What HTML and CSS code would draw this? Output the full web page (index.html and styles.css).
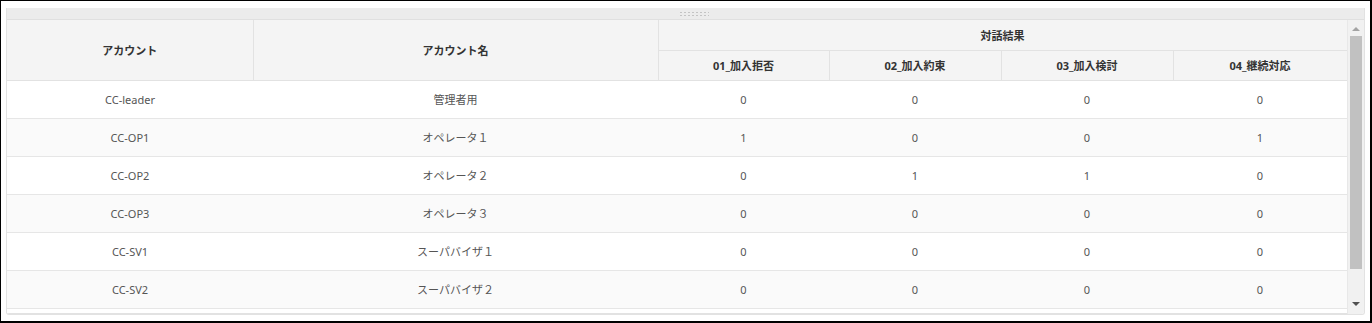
FILE: index.html
```html
<!DOCTYPE html>
<html lang="ja">
<head>
<meta charset="utf-8">
<link rel="stylesheet" href="styles.css">
</head>
<body>
<div class="frame">
  <div class="panel">
    <div class="grip-bar"><span class="grip"></span></div>
    <div class="body">
      <div class="viewport">
        <table class="grid">
          <colgroup>
            <col class="c1"><col class="c2"><col class="c3"><col class="c4"><col class="c5"><col class="c6">
          </colgroup>
          <thead>
            <tr class="h1">
              <th rowspan="2">アカウント</th>
              <th rowspan="2">アカウント名</th>
              <th colspan="4">対話結果</th>
            </tr>
            <tr class="h2">
              <th>01_加入拒否</th>
              <th>02_加入約束</th>
              <th>03_加入検討</th>
              <th>04_継続対応</th>
            </tr>
          </thead>
          <tbody>
            <tr><td>CC-leader</td><td>管理者用</td><td>0</td><td>0</td><td>0</td><td>0</td></tr>
            <tr class="alt"><td>CC-OP1</td><td>オペレータ１</td><td>1</td><td>0</td><td>0</td><td>1</td></tr>
            <tr><td>CC-OP2</td><td>オペレータ２</td><td>0</td><td>1</td><td>1</td><td>0</td></tr>
            <tr class="alt"><td>CC-OP3</td><td>オペレータ３</td><td>0</td><td>0</td><td>0</td><td>0</td></tr>
            <tr><td>CC-SV1</td><td>スーパバイザ１</td><td>0</td><td>0</td><td>0</td><td>0</td></tr>
            <tr class="alt"><td>CC-SV2</td><td>スーパバイザ２</td><td>0</td><td>0</td><td>0</td><td>0</td></tr>
            <tr><td></td><td></td><td></td><td></td><td></td><td></td></tr>
          </tbody>
        </table>
      </div>
      <div class="scrollbar">
        <span class="arrow up"></span>
        <div class="track"><div class="thumb"></div></div>
        <span class="arrow down"></span>
      </div>
    </div>
  </div>
</div>
</body>
</html>
```

FILE: styles.css
```css
* { box-sizing: border-box; }
html, body { margin: 0; padding: 0; background: #fff; }
body {
  font-family: "Noto Sans", "Noto Sans CJK JP", sans-serif;
  font-size: 11px;
  color: #555;
}
.frame {
  width: 1372px;
  height: 323px;
  border: 1px solid #000;
  border-bottom-width: 2px;
  border-right-width: 2px;
  padding: 7px 6px 0 5px;
}
.panel {
  width: 1359px;
  height: 307px;
  border: 1px solid #e2e2e2;
  border-top: none;
  border-radius: 0 0 3px 3px;
  display: flex;
  flex-direction: column;
  overflow: hidden;
}
.grip-bar {
  height: 12px;
  background: #ececec;
  border-bottom: 1px solid #e0e0e0;
  display: flex;
  justify-content: center;
  align-items: center;
  padding-left: 16px;
}
.grip {
  width: 30px;
  height: 5px;
  background-image: radial-gradient(circle, #c4c4c4 0.9px, transparent 1.1px);
  background-size: 4px 3px;
  background-position: 0 0;
}
.body {
  flex: 1;
  display: flex;
  min-height: 0;
}
.viewport {
  width: 1341px;
  overflow: hidden;
  border-bottom: 1px solid #e2e2e2;
}
.grid {
  width: 1340px;
  table-layout: fixed;
  border-collapse: collapse;
}
.c1 { width: 246px; }
.c2 { width: 405px; }
.c3 { width: 171px; }
.c4 { width: 172px; }
.c5 { width: 172px; }
.c6 { width: 174px; }
th {
  background: #f4f4f4;
  color: #333;
  font-weight: bold;
  font-size: 11px;
  border: 1px solid #e2e2e2;
  border-top: none;
  height: 30px;
  padding: 0;
  text-align: center;
}
.h1 th:first-child { border-left: none; }
.h2 th { height: 30px; }
td {
  height: 38px;
  text-align: center;
  padding: 0;
  border-bottom: 1px solid #e6e6e6;
  background: #fff;
  color: #555;
}
tr.alt td { background: #fafafa; }
.scrollbar {
  width: 17px;
  background: #f1f1f1;
  display: flex;
  flex-direction: column;
  align-items: center;
  border-left: 1px solid #e8e8e8;
}
.arrow {
  width: 0;
  height: 0;
  border-left: 4px solid transparent;
  border-right: 4px solid transparent;
}
.arrow.up {
  border-bottom: 4px solid #a3a3a3;
  margin: 7px 0 5px;
}
.arrow.down {
  border-top: 4px solid #505050;
  margin: 7px 0 8px;
}
.track {
  flex: 1;
  width: 100%;
  padding: 0 1px 0 1px;
}
.thumb {
  height: 233px;
  background: #c1c1c1;
  margin: 0 1px;
}
```
